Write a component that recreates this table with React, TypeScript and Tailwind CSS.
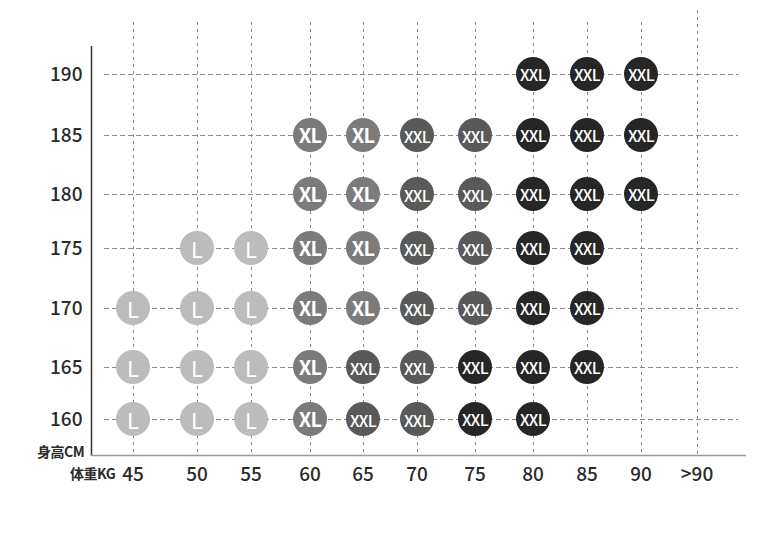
const cols = [
  { label: '45', x: 133 },
  { label: '50', x: 197 },
  { label: '55', x: 251 },
  { label: '60', x: 310 },
  { label: '65', x: 363 },
  { label: '70', x: 417 },
  { label: '75', x: 475 },
  { label: '80', x: 533 },
  { label: '85', x: 587 },
  { label: '90', x: 641 },
  { label: '>90', x: 697 },
]

const rows = [
  { label: '190', y: 74 },
  { label: '185', y: 135 },
  { label: '180', y: 194 },
  { label: '175', y: 248 },
  { label: '170', y: 308 },
  { label: '165', y: 367 },
  { label: '160', y: 419 },
]

// one string per height row, one letter per weight column:
// . empty, L, X = XL, M = XXL grey, D = XXL dark
const table = [
  '.......DDD.',
  '...XXMMDDD.',
  '...XXMMDDD.',
  '.LLXXMMDD..',
  'LLLXXMMDD..',
  'LLLXMMDDD..',
  'LLLXMMDD...',
]

const dotClass: Record<string, string> = {
  L: 'w-[34px] h-[34px] rounded-full bg-[#bcbcbc] flex items-center justify-center text-white text-[22px] leading-none',
  X: 'w-[34px] h-[34px] rounded-full bg-[#7b7b7b] flex items-center justify-center text-white text-[20px] font-bold leading-none tracking-[-0.8px]',
  M: 'w-[34px] h-[34px] rounded-full bg-[#595959] flex items-center justify-center text-white text-[16px] font-medium leading-none tracking-[-0.6px] pt-[2px]',
  D: 'w-[34px] h-[34px] rounded-full bg-[#262626] flex items-center justify-center text-white text-[16px] font-medium leading-none tracking-[-0.6px]',
}

const dotText: Record<string, string> = { L: 'L', X: 'XL', M: 'XXL', D: 'XXL' }

// track sizes: distance between neighbouring centres, last one is the dot itself
const colTracks = 'grid grid-cols-[64px_54px_59px_53px_54px_58px_58px_54px_54px_56px_34px]'
const rowTracks = 'grid grid-rows-[61px_59px_54px_60px_59px_52px_34px]'

export default function App() {
  return (
    <div className="relative w-[766px] h-[551px] bg-white overflow-hidden font-['Noto_Sans_CJK_SC','Noto_Sans',sans-serif] text-[#2b2b2b]">
      {/* grid lines */}
      <svg className="absolute inset-0" width={766} height={551}>
        {cols.map((c, i) => (
          <line
            key={c.label}
            x1={c.x + 0.5}
            x2={c.x + 0.5}
            y1={i === cols.length - 1 ? 10 : 22}
            y2={455}
            stroke="#8a8a8a"
            strokeWidth={1}
            strokeDasharray="3 4"
          />
        ))}
        {rows.map((r) => (
          <line
            key={r.label}
            x1={104}
            x2={738}
            y1={r.y + 0.5}
            y2={r.y + 0.5}
            stroke="#8a8a8a"
            strokeWidth={1}
            strokeDasharray="5 3"
          />
        ))}
        <line x1={91.5} x2={91.5} y1={46} y2={456} stroke="#333" strokeWidth={1.5} />
        <line x1={91} x2={746} y1={455.5} y2={455.5} stroke="#9a9a9a" strokeWidth={1.5} />
      </svg>

      <div className="relative pt-[57px]">
        <div className="flex">
          {/* height labels */}
          <div className={`${rowTracks} w-[116px] pl-[50px]`}>
            {rows.map((r) => (
              <div key={r.label} className="h-[34px] flex items-center text-[19px] leading-none font-medium -translate-y-[2px]">
                {r.label}
              </div>
            ))}
          </div>

          {/* size dots */}
          <div className={`${colTracks} grid-rows-[61px_59px_54px_60px_59px_52px_34px]`}>
            {table.map((line, ri) =>
              line.split('').map((ch, ci) =>
                ch === '.' ? (
                  <div key={`${ri}-${ci}`} />
                ) : (
                  <div key={`${ri}-${ci}`} className={dotClass[ch]}>
                    {dotText[ch]}
                  </div>
                )
              )
            )}
          </div>
        </div>

        <div className="pl-[37px] mt-[5px] h-[20px] flex items-center text-[14px] font-bold leading-none tracking-[-0.5px]">
          身高CM
        </div>

        <div className="flex items-center h-[24px] mt-[-1px]">
          <div className="w-[116px] pl-[70px] text-[14px] font-bold leading-none tracking-[-0.5px] translate-y-[1px]">
            体重KG
          </div>
          <div className={colTracks}>
            {cols.map((c) => (
              <div key={c.label} className="w-[34px] flex justify-center text-[19px] leading-none font-medium whitespace-nowrap">
                {c.label}
              </div>
            ))}
          </div>
        </div>
      </div>
    </div>
  )
}
